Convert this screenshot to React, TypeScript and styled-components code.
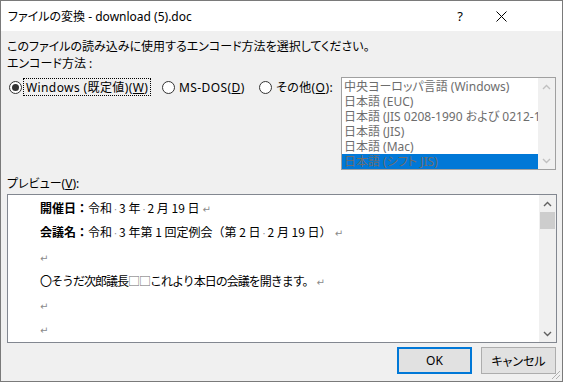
import React from "react";
import styled, { createGlobalStyle } from "styled-components";

const Global = createGlobalStyle`
  html, body { margin: 0; padding: 0; background: #ffffff; }
  body { font-family: "Noto Sans", "Noto Sans CJK JP", sans-serif; }
  * { box-sizing: border-box; }
`;

const UI_FONT = `"Noto Sans", "Noto Sans CJK JP", sans-serif`;
const DOC_FONT = `"Noto Sans CJK JP", "DejaVu Sans", sans-serif`;

const Window = styled.div`
  width: 563px;
  height: 382px;
  border: 1px solid #7a7a7a;
  display: flex;
  flex-direction: column;
  position: relative;
  background: #f0f0f0;
  font-family: ${UI_FONT};
  font-size: 12px;
  color: #000;
  font-feature-settings: "palt";
  overflow: hidden;
`;

const TitleBar = styled.div`
  height: 30px;
  background: #ffffff;
  display: flex;
  align-items: center;
  padding-left: 7px;
  padding-right: 35px;
  flex-shrink: 0;
`;

const Title = styled.div`
  flex: 1;
  font-size: 12px;
  color: #000;
  white-space: nowrap;
`;

const CaptionButton = styled.div<{ $w: number }>`
  width: ${(p) => p.$w}px;
  height: 30px;
  display: flex;
  align-items: center;
  justify-content: center;
  color: #000;
  font-size: 13px;
`;

const Body = styled.div`
  flex: 1;
  display: flex;
  flex-direction: column;
  padding: 7px 5px 0 6px;
`;

const Line = styled.div<{ $mt?: number }>`
  height: 17px;
  line-height: 17px;
  margin-top: ${(p) => p.$mt ?? 0}px;
  white-space: nowrap;
`;

const EncodingRow = styled.div`
  display: flex;
  align-items: flex-start;
  margin-top: 5px;
  height: 93px;
`;

const RadioGroup = styled.div`
  display: flex;
  align-items: center;
  margin-top: 1px;
  padding-left: 2px;
  flex: 1;
`;

const RadioItem = styled.label<{ $w?: number }>`
  display: flex;
  align-items: center;
  width: ${(p) => (p.$w ? `${p.$w}px` : "auto")};
  height: 18px;
  white-space: nowrap;
`;

const RadioCircle = styled.span<{ $checked?: boolean }>`
  width: 13px;
  height: 13px;
  border-radius: 50%;
  border: 1px solid #333333;
  background: #ffffff;
  display: flex;
  align-items: center;
  justify-content: center;
  flex-shrink: 0;
  &::after {
    content: "";
    width: 7px;
    height: 7px;
    border-radius: 50%;
    background: ${(p) => (p.$checked ? "#333333" : "transparent")};
  }
`;

const RadioText = styled.span<{ $focus?: boolean }>`
  margin-left: ${(p) => (p.$focus ? 1 : 4)}px;
  padding: 0 ${(p) => (p.$focus ? 2 : 0)}px;
  height: 18px;
  letter-spacing: 0.4px;
  border: ${(p) => (p.$focus ? "1px dotted #000" : "none")};
  display: flex;
  align-items: center;
`;

const ListBox = styled.div`
  width: 215px;
  height: 93px;
  margin-right: 1px;
  border: 1px solid #a0a0a0;
  background: #ffffff;
  display: flex;
`;

const ListItems = styled.div`
  flex: 1;
  padding-top: 1px;
  overflow: hidden;
`;

const ListItem = styled.div<{ $selected?: boolean }>`
  height: 15px;
  line-height: 15px;
  padding-left: 2px;
  color: #6d6d6d;
  background: ${(p) => (p.$selected ? "#0078d7" : "transparent")};
  white-space: nowrap;
  overflow: hidden;
`;

const ScrollBar = styled.div`
  width: 17px;
  background: #f0f0f0;
  display: flex;
  flex-direction: column;
  justify-content: space-between;
  align-items: stretch;
`;

const ArrowBox = styled.div`
  height: 17px;
  display: flex;
  align-items: center;
  justify-content: center;
`;

const Thumb = styled.div`
  height: 17px;
  margin: 0 1px;
  background: #cdcdcd;
`;

const PreviewBox = styled.div`
  margin-top: 2px;
  height: 149px;
  border: 1px solid #828790;
  background: #ffffff;
  display: flex;
`;

const DocArea = styled.div`
  flex: 1;
  padding: 1px 0 0 32px;
  font-family: ${DOC_FONT};
  font-feature-settings: normal;
  font-size: 12px;
  overflow: hidden;
`;

const DocLine = styled.div<{ $tight?: boolean }>`
  height: 24.3px;
  line-height: 24px;
  white-space: nowrap;
  letter-spacing: ${(p) => (p.$tight ? "-1px" : "0")};
`;

const Strong = styled.span`
  font-weight: 600;
`;

const Dot = styled.span`
  color: #8a8a8a;
  font-size: 9px;
  margin: 0 1px;
`;

const Para = styled.span<{ $flush?: boolean }>`
  color: #8a8a8a;
  font-size: 10px;
  letter-spacing: 0;
  margin-left: ${(p) => (p.$flush ? 0 : 3)}px;
`;

const Box = styled.span`
  color: #6a6a6a;
`;

const ButtonRow = styled.div`
  display: flex;
  justify-content: flex-end;
  gap: 9px;
  margin-top: 4px;
  padding-right: 1px;
`;

const Button = styled.div<{ $default?: boolean }>`
  width: 75px;
  height: 27px;
  background: #e1e1e1;
  border: ${(p) => (p.$default ? "2px solid #0078d7" : "1px solid #adadad")};
  display: flex;
  align-items: center;
  justify-content: center;
  font-size: 12px;
`;

const Grip = styled.svg`
  position: absolute;
  right: 1px;
  bottom: 1px;
`;

const Chevron = ({ up, color }: { up?: boolean; color: string }) => (
  <svg width="9" height="6" viewBox="0 0 9 6">
    <path
      d={up ? "M1 5 L4.5 1.5 L8 5" : "M1 1 L4.5 4.5 L8 1"}
      fill="none"
      stroke={color}
      strokeWidth="1.4"
    />
  </svg>
);

export default function App() {
  return (
    <>
      <Global />
      <Window>
        <TitleBar>
          <Title>ファイルの変換 - download (5).doc</Title>
          <CaptionButton $w={30}>?</CaptionButton>
          <CaptionButton $w={52}>
            <svg width="11" height="11" viewBox="0 0 11 11">
              <path d="M0.5 0.5 L10.5 10.5 M10.5 0.5 L0.5 10.5" stroke="#000" strokeWidth="1" />
            </svg>
          </CaptionButton>
        </TitleBar>
        <Body>
          <Line>このファイルの読み込みに使用するエンコード方法を選択してください。</Line>
          <Line>エンコード方法 :</Line>
          <EncodingRow>
            <RadioGroup>
              <RadioItem $w={153}>
                <RadioCircle $checked />
                <RadioText $focus>
                  Windows (既定値)(<u>W</u>)
                </RadioText>
              </RadioItem>
              <RadioItem $w={97}>
                <RadioCircle />
                <RadioText>
                  MS-DOS(<u>D</u>)
                </RadioText>
              </RadioItem>
              <RadioItem>
                <RadioCircle />
                <RadioText>
                  その他(<u>O</u>):
                </RadioText>
              </RadioItem>
            </RadioGroup>
            <ListBox>
              <ListItems>
                <ListItem>中央ヨーロッパ言語 (Windows)</ListItem>
                <ListItem>日本語 (EUC)</ListItem>
                <ListItem>日本語 (JIS 0208-1990 および 0212-1990)</ListItem>
                <ListItem>日本語 (JIS)</ListItem>
                <ListItem>日本語 (Mac)</ListItem>
                <ListItem $selected>日本語 (シフト JIS)</ListItem>
              </ListItems>
              <ScrollBar>
                <ArrowBox>
                  <Chevron up color="#c0c0c0" />
                </ArrowBox>
                <ArrowBox>
                  <Chevron color="#c0c0c0" />
                </ArrowBox>
              </ScrollBar>
            </ListBox>
          </EncodingRow>
          <Line $mt={5}>
            プレビュー(<u>V</u>):
          </Line>
          <PreviewBox>
            <DocArea>
              <DocLine>
                <Strong>開催日：</Strong>令和<Dot>·</Dot>3 年<Dot>·</Dot>2 月 19 日<Para>↵</Para>
              </DocLine>
              <DocLine>
                <Strong>会議名：</Strong>令和<Dot>·</Dot>3 年第 1 回定例会（第 2 日<Dot>·</Dot>2 月 19 日）<Para>↵</Para>
              </DocLine>
              <DocLine>
                <Para $flush>↵</Para>
              </DocLine>
              <DocLine $tight>
                〇そうだ次郎議長<Box>□□</Box>これより本日の会議を開きます。<Para>↵</Para>
              </DocLine>
              <DocLine>
                <Para $flush>↵</Para>
              </DocLine>
              <DocLine>
                <Para $flush>↵</Para>
              </DocLine>
            </DocArea>
            <ScrollBar>
              <div>
                <ArrowBox>
                  <Chevron up color="#606060" />
                </ArrowBox>
                <Thumb />
              </div>
              <ArrowBox>
                <Chevron color="#606060" />
              </ArrowBox>
            </ScrollBar>
          </PreviewBox>
          <ButtonRow>
            <Button $default>OK</Button>
            <Button>キャンセル</Button>
          </ButtonRow>
        </Body>
        <Grip width="12" height="12" viewBox="0 0 12 12">
          <path d="M11 3 L3 11 M11 7 L7 11 M11 11 L11 11" stroke="#b0b0b0" strokeWidth="1" />
        </Grip>
      </Window>
    </>
  );
}
